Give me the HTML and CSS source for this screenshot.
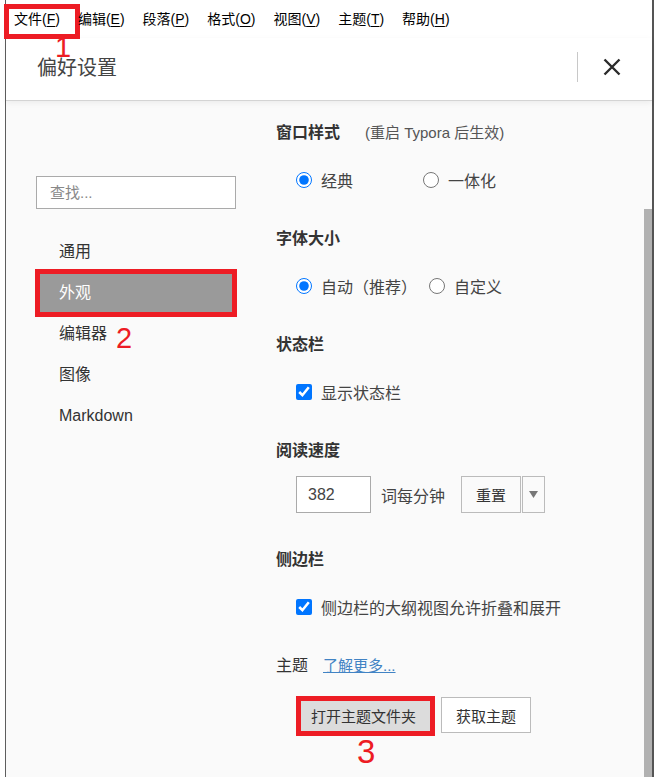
FILE: index.html
```html
<!DOCTYPE html>
<html lang="zh-CN">
<head>
    <meta charset="UTF-8">
    <meta name="viewport" content="width=device-width, initial-scale=1.0">
    <title>偏好设置</title>
    <link rel="stylesheet" href="styles.css">
</head>
<body>
    <div class="window">
        <!-- Menubalk -->
        <nav class="menubar">
            <span class="menu-item">文件(<u>F</u>)<span class="mark-box box-1"></span><span class="mark-num num-1">1</span></span>
            <span class="menu-item">编辑(<u>E</u>)</span>
            <span class="menu-item">段落(<u>P</u>)</span>
            <span class="menu-item">格式(<u>O</u>)</span>
            <span class="menu-item">视图(<u>V</u>)</span>
            <span class="menu-item">主题(<u>T</u>)</span>
            <span class="menu-item">帮助(<u>H</u>)</span>
        </nav>

        <!-- Kop van het venster -->
        <header class="pref-header">
            <h1>偏好设置</h1>
            <span class="header-sep"></span>
            <button class="close-btn" aria-label="关闭">
                <svg width="18" height="18" viewBox="0 0 18 18">
                    <path d="M1.5 1.5 L16.5 16.5 M16.5 1.5 L1.5 16.5" stroke="#2b2b2b" stroke-width="2.4" fill="none"/>
                </svg>
            </button>
        </header>

        <div class="pref-body">
            <aside class="sidebar">
                <input class="search" type="text" placeholder="查找...">
                <ul class="nav">
                    <li>通用</li>
                    <li class="active">外观<span class="mark-box box-2"></span></li>
                    <li>编辑器<span class="mark-num num-2">2</span></li>
                    <li>图像</li>
                    <li>Markdown</li>
                </ul>
            </aside>

            <main class="content">
                <section class="section">
                    <h2 class="section-title">窗口样式<span class="hint">(重启 Typora 后生效)</span></h2>
                    <div class="options">
                        <label class="opt wide"><input type="radio" name="win" checked>经典</label>
                        <label class="opt"><input type="radio" name="win">一体化</label>
                    </div>
                </section>

                <section class="section">
                    <h2 class="section-title">字体大小</h2>
                    <div class="options">
                        <label class="opt"><input type="radio" name="size" checked>自动（推荐）</label>
                        <label class="opt"><input type="radio" name="size">自定义</label>
                    </div>
                </section>

                <section class="section">
                    <h2 class="section-title">状态栏</h2>
                    <div class="options">
                        <label class="opt"><input type="checkbox" checked>显示状态栏</label>
                    </div>
                </section>

                <section class="section">
                    <h2 class="section-title">阅读速度</h2>
                    <div class="options speed">
                        <input class="num" type="text" value="382">
                        <span class="unit">词每分钟</span>
                        <button class="btn reset">重置</button>
                        <button class="btn drop" aria-label="更多">
                            <svg width="9" height="7" viewBox="0 0 9 7"><path d="M0 0 H9 L4.5 7 Z" fill="#777"/></svg>
                        </button>
                    </div>
                </section>

                <section class="section">
                    <h2 class="section-title">侧边栏</h2>
                    <div class="options">
                        <label class="opt"><input type="checkbox" checked>侧边栏的大纲视图允许折叠和展开</label>
                    </div>
                </section>

                <section class="section">
                    <h2 class="section-title plain">主题<a class="more" href="#">了解更多...</a></h2>
                    <div class="theme-buttons">
                        <button class="btn open">打开主题文件夹<span class="mark-box box-3"></span><span class="mark-num num-3">3</span></button>
                        <button class="btn">获取主题</button>
                    </div>
                </section>
            </main>

            <div class="scrollbar"><div class="thumb"></div></div>
        </div>
    </div>
</body>
</html>
```

FILE: styles.css
```css
/* Basis */
* {
    margin: 0;
    padding: 0;
    box-sizing: border-box;
}

body {
    background-color: #ffffff;
    font-family: "Liberation Sans", "Noto Sans CJK SC", sans-serif;
    color: #333;
    width: 656px;
    height: 777px;
    overflow: hidden;
}

.window {
    margin-left: 5px;
    width: 649px;
    height: 777px;
    border-left: 1px solid #5e5e5e;
    border-right: 2px solid #555;
    display: flex;
    flex-direction: column;
}

/* Menubalk */
.menubar {
    height: 38px;
    display: flex;
    align-items: center;
    gap: 18px;
    padding-left: 8px;
    font-size: 14px;
    color: #000;
    flex-shrink: 0;
    position: relative;
    z-index: 3;
}

.menu-item {
    position: relative;
    line-height: 20px;
}

.menu-item u {
    text-decoration-thickness: 1px;
    text-underline-offset: 2px;
}

/* Rode aantekeningen */
.mark-box {
    position: absolute;
    border: 5px solid #ed1c24;
    pointer-events: none;
}

.mark-num {
    position: absolute;
    color: #ed1c24;
    font-family: "Liberation Sans", sans-serif;
    line-height: 1;
}

.box-1 {
    left: -10px;
    top: -5px;
    width: 76px;
    height: 35px;
}

.num-1 {
    left: 41px;
    top: 24px;
    font-size: 29px;
}

/* Kop */
.pref-header {
    height: 63px;
    display: flex;
    align-items: center;
    padding: 0 31px 5px 31px;
    border-bottom: 1px solid #d4d4d4;
    box-shadow: 0 2px 6px rgba(0, 0, 0, 0.06);
    position: relative;
    z-index: 2;
    background-color: #fff;
    flex-shrink: 0;
}

.pref-header h1 {
    flex: 1;
    font-size: 20px;
    font-weight: normal;
    color: #444;
    font-family: "Noto Sans CJK SC", sans-serif;
    line-height: 28px;
}

.header-sep {
    width: 1px;
    height: 30px;
    background-color: #c8c8c8;
}

.close-btn {
    margin-left: 25px;
    width: 18px;
    height: 18px;
    border: none;
    background: none;
    display: flex;
}

/* Inhoud */
.pref-body {
    flex: 1;
    display: flex;
    background-color: #fafafa;
    min-height: 0;
}

.sidebar {
    width: 244px;
    flex-shrink: 0;
    padding: 75px 14px 0 30px;
}

.search {
    width: 200px;
    height: 33px;
    border: 1px solid #aaa;
    background-color: #fff;
    padding-left: 13px;
    font-size: 15px;
    font-family: "Liberation Sans", "Noto Sans CJK SC", sans-serif;
    outline: none;
}

.search::placeholder {
    color: #888;
}

.nav {
    list-style: none;
    margin-top: 22px;
    width: 200px;
}

.nav li {
    position: relative;
    height: 41px;
    line-height: 41px;
    padding-left: 23px;
    font-size: 16px;
    color: #333;
}

.nav li.active {
    background-color: #9a9a9a;
    color: #fff;
}

.box-2 {
    left: -1px;
    right: -1px;
    top: -3px;
    bottom: -4px;
}

.num-2 {
    left: 80px;
    top: 11px;
    font-size: 29px;
    line-height: 29px;
}

.content {
    flex: 1;
    padding: 20px 0 0 26px;
}

.section {
    margin-bottom: 35px;
}

.section-title {
    height: 24px;
    line-height: 24px;
    font-size: 16px;
    font-weight: bold;
    color: #333;
    display: flex;
    align-items: center;
}

.section-title.plain {
    font-weight: normal;
}

.hint {
    margin-left: 25px;
    font-size: 15px;
    font-weight: normal;
    color: #555;
}

.more {
    margin-left: 15px;
    font-size: 15px;
    color: #4183c4;
}

.options {
    margin: 23px 0 0 20px;
    height: 24px;
    display: flex;
    align-items: center;
    font-size: 16px;
    color: #444;
}

.opt {
    display: flex;
    align-items: center;
    margin-right: 12px;
}

.opt.wide {
    width: 127px;
    margin-right: 0;
}

.opt input {
    width: 16px;
    height: 16px;
    margin: 0 9px 0 0;
}

/* Leessnelheid */
.options.speed {
    margin-top: 13px;
    height: 37px;
}

.num {
    width: 75px;
    height: 37px;
    border: 1px solid #aaa;
    background-color: #fff;
    padding-left: 11px;
    font-size: 16px;
    color: #444;
    font-family: "Liberation Sans", sans-serif;
}

.unit {
    margin-left: 10px;
}

.btn {
    position: relative;
    height: 37px;
    border: 1px solid #bbb;
    background-color: #fafafa;
    padding: 0 14px;
    font-size: 15px;
    color: #333;
    font-family: "Liberation Sans", "Noto Sans CJK SC", sans-serif;
}

.btn.reset {
    margin-left: 16px;
    width: 60px;
    padding: 0;
}

.btn.drop {
    width: 23px;
    margin-left: 1px;
    padding: 0;
    display: flex;
    align-items: center;
    justify-content: center;
}

/* Thema */
.theme-buttons {
    margin: 19px 0 0 20px;
    display: flex;
    gap: 10px;
}

.theme-buttons .btn {
    height: 36px;
    background-color: #fff;
}

.theme-buttons .btn.open {
    background-color: #dcdcdc;
    border-color: #c4c4c4;
}

.box-3 {
    left: -1px;
    top: -2px;
    width: 139px;
    height: 40px;
}

.num-3 {
    left: 60px;
    top: 37px;
    font-size: 33px;
    line-height: 33px;
}

/* Schuifbalk */
.scrollbar {
    width: 8px;
    flex-shrink: 0;
    padding-top: 108px;
    display: flex;
    flex-direction: column;
}

.thumb {
    flex: 1;
    background-color: #b1b1b1;
}
```
